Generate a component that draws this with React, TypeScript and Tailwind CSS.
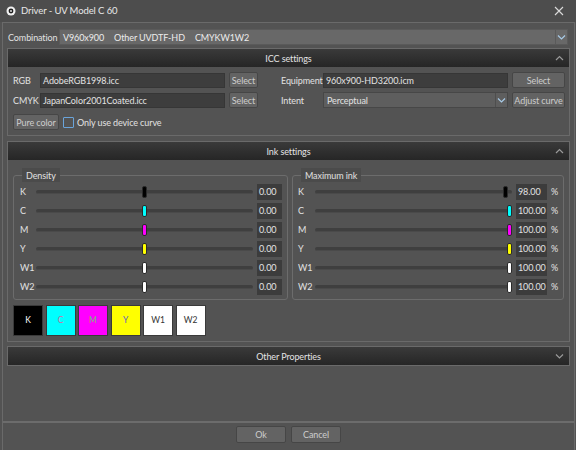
import React from 'react';

const inks = [
  { name: 'K', color: '#000000', density: 50, max: 98, maxText: '98.00' },
  { name: 'C', color: '#00ffff', density: 50, max: 100, maxText: '100.00' },
  { name: 'M', color: '#ff00ff', density: 50, max: 100, maxText: '100.00' },
  { name: 'Y', color: '#ffff00', density: 50, max: 100, maxText: '100.00' },
  { name: 'W1', color: '#ffffff', density: 50, max: 100, maxText: '100.00' },
  { name: 'W2', color: '#ffffff', density: 50, max: 100, maxText: '100.00' },
];

const swatches = [
  { name: 'K', bg: '#000000', fg: '#ffffff' },
  { name: 'C', bg: '#00ffff', fg: '#d070a0' },
  { name: 'M', bg: '#ff00ff', fg: '#70c070' },
  { name: 'Y', bg: '#ffff00', fg: '#6060c0' },
  { name: 'W1', bg: '#ffffff', fg: '#333333' },
  { name: 'W2', bg: '#ffffff', fg: '#333333' },
];

const Chevron: React.FC<{ up?: boolean; className?: string }> = ({ up, className }) => (
  <svg width="9" height="6" viewBox="0 0 9 6" className={className}>
    <path d={up ? 'M1 5 L4.5 1.5 L8 5' : 'M1 1.5 L4.5 5 L8 1.5'} fill="none" stroke="currentColor" strokeWidth="1.2" />
  </svg>
);

const Btn: React.FC<{ label: string; className?: string }> = ({ label, className }) => (
  <div
    className={`h-[16px] flex items-center justify-center whitespace-nowrap bg-[#636363] border border-[#464646] rounded-[2px] text-[#cdcdcd] ${className ?? ''}`}
  >
    {label}
  </div>
);

const Header: React.FC<{ title: string; up?: boolean }> = ({ title, up }) => (
  <div className="relative h-[18px] flex items-center justify-center bg-linear-to-b from-[#3a3a3a] to-[#262626] text-[#e4e4e4]">
    {title}
    <Chevron up={up} className="absolute right-[5px] top-[6px] text-[#9a9a9a]" />
  </div>
);

const Slider: React.FC<{ pct: number; color: string }> = ({ pct, color }) => (
  <div className="relative flex-1 h-[12px] flex items-center">
    <div className="w-full h-[4px] rounded-full bg-[#3f3f3f] border-b border-[#4a4a4a]" />
    <div
      className="absolute top-0 w-[5px] h-[12px] rounded-[2px] border border-[#2a2a2a]"
      style={{ left: `calc((100% - 5px) * ${pct / 100})`, backgroundColor: color }}
    />
  </div>
);

const GroupBox: React.FC<{ title: string; className?: string; children: React.ReactNode }> = ({ title, className, children }) => (
  <div className={`relative border border-[#6c6c6c] rounded-[3px] ${className ?? ''}`}>
    <div className="absolute -top-[8px] left-[8px] h-[14px] px-[4px] flex items-center bg-[#4b4b4b] text-[#e0e0e0]">
      {title}
    </div>
    {children}
  </div>
);

export default function App() {
  return (
    <div className="w-[576px] h-[450px] bg-[#535353] flex flex-col text-[9px] tracking-[-0.1px] text-[#e2e2e2] font-['Lato',sans-serif] leading-none select-none whitespace-nowrap">
      {/* title bar */}
      <div className="h-[22px] shrink-0 flex items-center pl-[6px] pr-[12px] bg-[#4d4d4d]">
        <svg width="10" height="10" viewBox="0 0 10 10">
          <circle cx="5" cy="5" r="4.5" fill="#f0f0f0" />
          <circle cx="5" cy="5" r="2.4" fill="#1e1e1e" />
          <circle cx="5" cy="5" r="0.9" fill="#f0f0f0" />
        </svg>
        <span className="ml-[5px] text-[9.5px] text-[#e8e8e8]">Driver - UV Model C 60</span>
        <svg width="10" height="10" viewBox="0 0 10 10" className="ml-auto">
          <path d="M1 1 L9 9 M9 1 L1 9" stroke="#dcdcdc" strokeWidth="1.1" />
        </svg>
      </div>

      {/* body */}
      <div className="flex-1 flex flex-col ml-[2px] mr-[1px] border border-b-0 border-[#6a6a6a]">
        <div className="px-[4px] pt-[6px]">
          {/* combination */}
          <div className="flex items-center h-[16px]">
            <span className="w-[52px] pl-[1px]">Combination</span>
            <div className="flex-1 mr-[2px] h-[16px] flex items-center bg-[#686868] border border-[#5a5a5a] text-[#ececec]">
              <span className="pl-[3px]">V960x900</span>
              <span className="pl-[10px]">Other UVDTF-HD</span>
              <span className="pl-[10px]">CMYKW1W2</span>
              <div className="ml-auto h-full w-[12px] flex items-center justify-center border-l border-[#5a5a5a]">
                <Chevron className="text-[#a8cbe8]" />
              </div>
            </div>
          </div>

          {/* ICC settings */}
          <div className="mt-[3px] border border-[#6a6a6a]">
            <Header title="ICC settings" up />
            <div className="pt-[5px] pb-[5px] pl-[5px] pr-[4px] flex flex-col gap-[4px]">
              <div className="flex items-center h-[16px]">
                <span className="w-[27px]">RGB</span>
                <div className="w-[185px] h-[15px] flex items-center pl-[2px] bg-[#3d3d3d] border border-[#363636]">AdobeRGB1998.icc</div>
                <Btn label="Select" className="ml-[4px] w-[29px]" />
                <span className="ml-[23px] w-[42px]">Equipment</span>
                <div className="w-[185px] h-[15px] flex items-center pl-[2px] bg-[#3d3d3d] border border-[#363636]">960x900-HD3200.icm</div>
                <Btn label="Select" className="ml-[4px] w-[53px]" />
              </div>
              <div className="flex items-center h-[16px]">
                <span className="w-[27px]">CMYK</span>
                <div className="w-[185px] h-[15px] flex items-center pl-[2px] bg-[#3d3d3d] border border-[#363636]">JapanColor2001Coated.icc</div>
                <Btn label="Select" className="ml-[4px] w-[29px]" />
                <span className="ml-[23px] w-[42px]">Intent</span>
                <div className="w-[185px] h-[16px] flex items-center pl-[3px] bg-[#5e5e5e] border border-[#474747]">
                  Perceptual
                  <div className="ml-auto h-full w-[12px] flex items-center justify-center border-l border-[#4e4e4e]">
                    <Chevron className="text-[#a8cbe8]" />
                  </div>
                </div>
                <Btn label="Adjust curve" className="ml-[4px] w-[53px]" />
              </div>
              <div className="flex items-center h-[16px] mt-[2px]">
                <Btn label="Pure color" className="w-[46px]" />
                <div className="ml-[4px] w-[11px] h-[11px] border border-[#6aa4da] rounded-[1px]" />
                <span className="ml-[3px]">Only use device curve</span>
              </div>
            </div>
          </div>

          {/* Ink settings */}
          <div className="mt-[5px] border border-[#6a6a6a]">
            <Header title="Ink settings" up />
            <div className="pt-[15px] pl-[5px] pr-[5px] flex gap-[4px]">
              <GroupBox title="Density" className="w-[275px]">
                <div className="pt-[6px] pb-[3px] pr-[5px]">
                  {inks.map((ink) => (
                    <div key={ink.name} className="flex items-center h-[19px]">
                      <span className="w-[22px] pl-[6px]">{ink.name}</span>
                      <Slider pct={ink.density} color={ink.color} />
                      <div className="ml-[4px] w-[25px] h-[16px] flex items-center pl-[2px] bg-[#3c3c3c]">0.00</div>
                    </div>
                  ))}
                </div>
              </GroupBox>
              <GroupBox title="Maximum ink" className="flex-1">
                <div className="pt-[6px] pb-[3px] pr-[4px]">
                  {inks.map((ink) => (
                    <div key={ink.name} className="flex items-center h-[19px]">
                      <span className="w-[22px] pl-[5px]">{ink.name}</span>
                      <Slider pct={ink.max} color={ink.color} />
                      <div className="ml-[4px] w-[31px] h-[16px] flex items-center pl-[2px] bg-[#3c3c3c]">{ink.maxText}</div>
                      <span className="ml-[4px] w-[8px]">%</span>
                    </div>
                  ))}
                </div>
              </GroupBox>
            </div>
            <div className="flex gap-[2.5px] pl-[5px] pt-[5px] pb-[5px]">
              {swatches.map((s) => (
                <div
                  key={s.name}
                  className="w-[30px] h-[31px] flex items-center justify-center border border-[#3a3a3a] text-[8.5px]"
                  style={{ backgroundColor: s.bg, color: s.fg }}
                >
                  {s.name}
                </div>
              ))}
            </div>
          </div>

          {/* Other properties */}
          <div className="mt-[4px] border border-[#6a6a6a]">
            <Header title="Other Properties" />
          </div>
        </div>

        <div className="flex-1" />

        {/* footer */}
        <div className="h-[2px] bg-[#6c6c6c]" />
        <div className="h-[27px] flex justify-center gap-[5px] pt-[3px]">
          <Btn label="Ok" className="w-[50px] h-[17px]" />
          <Btn label="Cancel" className="w-[50px] h-[17px]" />
        </div>
      </div>
    </div>
  );
}
